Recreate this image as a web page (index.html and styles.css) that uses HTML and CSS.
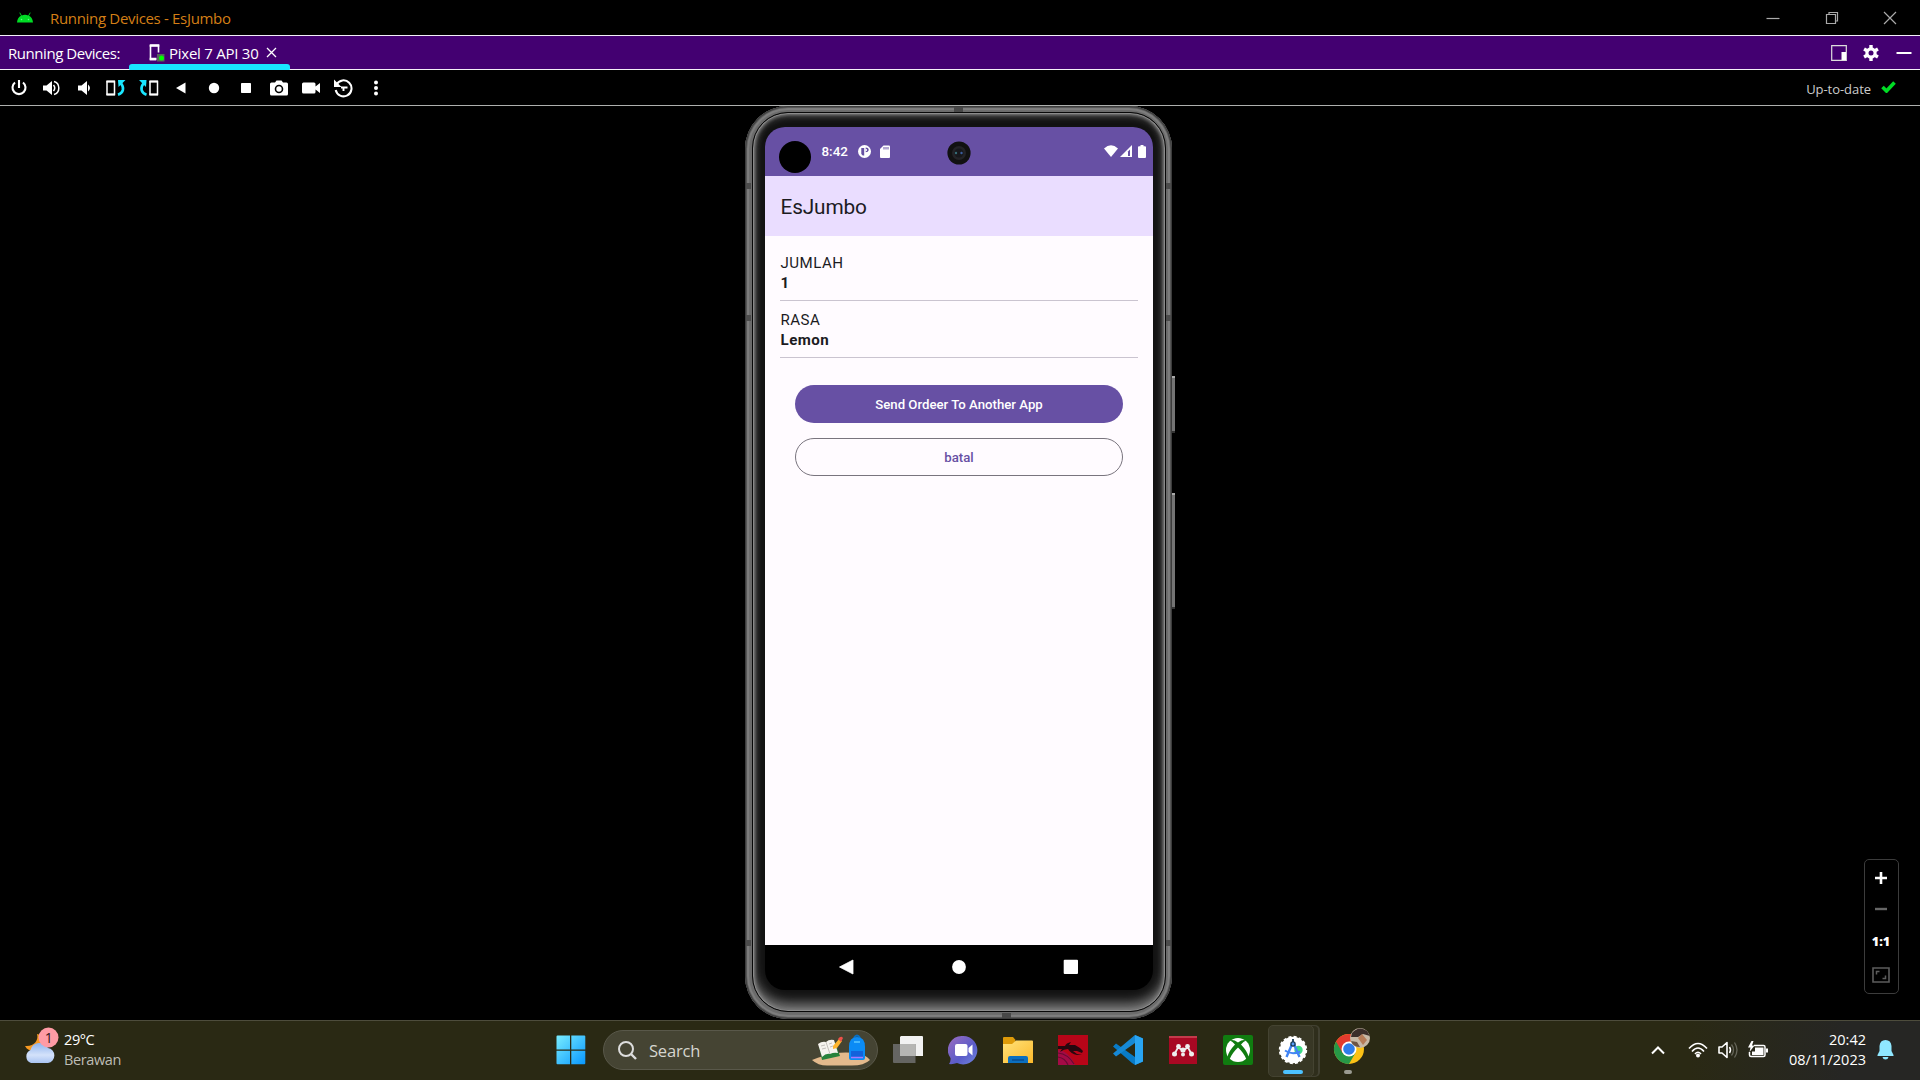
FILE: index.html
```html
<!DOCTYPE html>
<html lang="en">
<head>
<meta charset="utf-8">
<title>Running Devices - EsJumbo</title>
<link rel="stylesheet" href="styles.css">
</head>
<body>
<header class="titlebar">
  <svg class="android" width="16" height="11" viewBox="0 0 16 11"><path d="M0 10.5C.2 7.200 1.800 5 4 3.800L2.300.8l.7-.4 1.800 3c2-.8 4.400-.8 6.400 0l1.800-3 .7.400L12 3.800c2.200 1.200 3.800 3.400 4 6.700z" fill="#00dc25"/><circle cx="4.500" cy="7.500" r=".8" fill="#5fff80"/><circle cx="11.500" cy="7.500" r=".8" fill="#5fff80"/></svg>
  <span class="window-title">Running Devices - EsJumbo</span>
  <div class="window-controls">
    <svg width="14" height="14" viewBox="0 0 14 14"><path d="M.5 7.500h13"/></svg>
    <svg width="14" height="14" viewBox="0 0 14 14"><path d="M1.500 3.500h9v9h-9zM4 3.500v-2h8.500V10h-2"/></svg>
    <svg width="14" height="14" viewBox="0 0 14 14"><path d="M1 1l12 12M13 1L1 13"/></svg>
  </div>
</header>

<nav class="tabbar">
  <span class="tab-label">Running Devices:</span>
  <div class="tab">
    <svg width="16" height="18" viewBox="0 0 16 18"><path d="M1.500 1.500h8v7M1.500 1v14.500H7" fill="none" stroke="#fff" stroke-width="1.600"/><path d="M.7 1.500h9.600M.7 15h6.800" stroke="#fff" stroke-width="2.400"/><rect x="8" y="10" width="7.500" height="7.500" fill="#55665c"/><circle cx="12.500" cy="14" r="2.500" fill="#0f0"/></svg>
    <span class="tab-name">Pixel 7 API 30</span>
    <svg width="11" height="11" viewBox="0 0 11 11"><path d="M1 1l9 9M10 1l-9 9" stroke="#fff" stroke-width="1.300"/></svg>
  </div>
  <div class="tab-actions">
    <svg width="16" height="16" viewBox="0 0 16 16"><path d="M.7.7h14.600v14.600H.7z" fill="none" stroke="#ddd" stroke-width="1.200"/><path d="M10.500 7H15v8h-4.500z" fill="#fff"/></svg>
    <svg width="16" height="16" viewBox="0 0 16 16"><g fill="#fff"><circle cx="8" cy="8" r="5.700"/><path d="M6.300 0h3.400v16H6.300z"/><path d="M6.300 0h3.400v16H6.300z" transform="rotate(60 8 8)"/><path d="M6.300 0h3.400v16H6.300z" transform="rotate(120 8 8)"/></g><circle cx="8" cy="8" r="2.500" fill="#430071"/></svg>
    <svg width="16" height="16" viewBox="0 0 16 16"><path d="M.5 8h15" stroke="#fff" stroke-width="2"/></svg>
  </div>
</nav>

<div class="toolbar">
  <div class="tools">
    <svg viewBox="0 0 20 20"><path d="M6 4.500a6.500 6.500 0 1 0 8 0M10 2v8" fill="none" stroke="#fff" stroke-width="2.100"/></svg>
    <svg viewBox="0 0 20 20"><path d="M2 7.500h3.500L11 3v14l-5.500-4.500H2z" fill="#fff"/><path d="M12.500 7q2.500 3 0 6M13 3.500a6.800 6.800 0 0 1 0 13" fill="none" stroke="#fff" stroke-width="1.500"/></svg>
    <svg viewBox="0 0 20 20"><path d="M4 7.500h3.500L13 3v14l-5.500-4.500H4z" fill="#fff"/><path d="M14 6.500q4 3.500 0 7z" fill="#fff"/></svg>
    <svg viewBox="0 0 20 20"><path d="M1 3.500h7.500v13H1z" fill="none" stroke="#fff" stroke-width="1.500"/><path d="M.5 3.500H9M.5 16.500H9" stroke="#fff" stroke-width="2.200"/><path d="M12 16.800c5.500-2 6.500-6.500 3-11.500" fill="none" stroke="#19e6ff" stroke-width="2.600"/><path d="M12 2h7.500L12.500 9z" fill="#19e6ff"/></svg>
    <svg viewBox="0 0 20 20"><path d="M11 3.500h7.500v13H11z" fill="none" stroke="#fff" stroke-width="1.500"/><path d="M10.500 3.500H19M10.500 16.500H19" stroke="#fff" stroke-width="2.200"/><path d="M7.500 16.800c-5.500-2-6.500-6.500-3-11.500" fill="none" stroke="#19e6ff" stroke-width="2.600"/><path d="M7.500 2H0l7 7z" fill="#19e6ff"/></svg>
    <svg viewBox="0 0 20 20"><path d="M14.500 4.500v11L5 10z" fill="#fff"/></svg>
    <svg viewBox="0 0 20 20"><circle cx="10" cy="10" r="5.200" fill="#fff"/></svg>
    <svg viewBox="0 0 20 20"><rect x="5" y="5" width="10" height="10" rx=".7" fill="#fff"/></svg>
    <svg viewBox="0 0 20 20"><path d="M2.500 4.500H6L7.500 2.500h5L14 4.500h3.500q1.500 0 1.500 1.500v10q0 1.500-1.500 1.500h-15Q1 17.500 1 16V6q0-1.500 1.500-1.500z" fill="#fff"/><circle cx="10" cy="11" r="3.500" fill="none" stroke="#000" stroke-width="1.600"/></svg>
    <svg viewBox="0 0 20 20"><path d="M2.500 4.500H13q1.500 0 1.500 1.500v2.500L19 5v10l-4.500-3.500V14q0 1.500-1.500 1.500H2.500Q1 15.500 1 14V6q0-1.500 1.500-1.500z" fill="#fff"/></svg>
    <svg viewBox="0 0 20 20"><path d="M3.500 6.500a8 8 0 1 1-.8 5.500" fill="none" stroke="#fff" stroke-width="2"/><path d="M8 9.500h6.500M10.500 9.500v3.500" fill="none" stroke="#fff" stroke-width="1.900"/><path d="M1 1.500v7.500h7.500z" fill="#fff"/></svg>
    <svg viewBox="0 0 20 20"><g fill="#fff"><circle cx="10" cy="4.500" r="2"/><circle cx="10" cy="10" r="2"/><circle cx="10" cy="15.500" r="2"/></g></svg>
  </div>
  <div class="status">
    <span class="status-text">Up-to-date</span>
    <svg width="15" height="12" viewBox="0 0 15 12"><path d="M1.500 6l4 4L13.500 1.500" fill="none" stroke="#00dc25" stroke-width="3.600"/></svg>
  </div>
</div>

<main class="stage">
  <div class="phone">
    <i class="notch n-top"></i><i class="notch n-bottom"></i>
    <i class="band b1"></i><i class="band b2"></i><i class="band b3"></i>
    <i class="side power"></i><i class="side volume"></i>
    <div class="bezel">
      <div class="screen">
        <div class="statusbar">
          <span class="lens-hole"></span>
          <span class="clock">8:42</span>
          <svg class="sb-p" width="13" height="13" viewBox="0 0 13 13"><circle cx="6.500" cy="6.500" r="6.500" fill="#fff"/><path d="M3.300 3h2.900v7.500H4.700L3.300 9zM7.700 2.500q3.300.2 3 2.800-.4 2-3 2z" fill="#6750a4"/><circle cx="8.200" cy="5" r=".9" fill="#fff"/></svg>
          <svg class="sb-sd" width="10" height="13" viewBox="0 0 10 13"><path d="M3.500.5H9q1 0 1 1V12q0 1-1 1H1q-1 0-1-1V4z" fill="#fff"/><path d="M4 2v2.500M6 2v2.500M8 2v2.500" stroke="#6750a4"/></svg>
          <div class="signals">
            <svg width="14" height="12" viewBox="0 0 14 12"><path d="M7 12L0 3.500Q7-3 14 3.500z" fill="#fff"/></svg>
            <svg width="12" height="12" viewBox="0 0 12 12"><path d="M0 12L12 0v12z" fill="#fff"/><path d="M10 4.500v6.500H8V6.500" fill="#6750a4"/></svg>
            <svg class="cell" width="8" height="13" viewBox="0 0 8 13"><path d="M2.500 0h3v1.300H7q1 0 1 1V12q0 1-1 1H1q-1 0-1-1V2.300q0-1 1-1h1.500z" fill="#fff"/></svg>
          </div>
          <svg class="camera" width="24" height="24" viewBox="0 0 24 24"><circle cx="12" cy="12" r="11.600" fill="#111"/><circle cx="12" cy="12" r="7" fill="#232327"/><circle cx="12" cy="12" r="4.500" fill="#17181c"/><circle cx="9" cy="12" r="1.200" fill="#376e78"/><circle cx="14.500" cy="12" r="1.200" fill="#3c5fa0"/></svg>
        </div>
        <div class="appbar">EsJumbo</div>
        <div class="content">
          <div class="field"><span>JUMLAH</span><b>1</b></div>
          <div class="field"><span>RASA</span><b>Lemon</b></div>
          <div class="buttons">
            <button class="filled">Send Ordeer To Another App</button>
            <button class="outlined">batal</button>
          </div>
        </div>
        <div class="navkeys">
          <svg width="16" height="16" viewBox="0 0 16 16"><path d="M14 1v14L.5 8z" fill="#fff" stroke="#fff" stroke-linejoin="round" stroke-width=".8"/></svg>
          <svg width="16" height="16" viewBox="0 0 16 16"><circle cx="8" cy="8" r="6.900" fill="#fff"/></svg>
          <svg width="16" height="16" viewBox="0 0 16 16"><rect x=".7" y=".7" width="14.300" height="14.300" rx="1" fill="#fff"/></svg>
        </div>
      </div>
    </div>
  </div>
  <div class="zoom">
    <svg width="14" height="14" viewBox="0 0 14 14"><path d="M7 1v12M1 7h12" stroke="#fff" stroke-width="2.600"/></svg>
    <svg width="14" height="14" viewBox="0 0 14 14"><path d="M1 7h12" stroke="#666" stroke-width="2.400"/></svg>
    <span class="ratio">1:1</span>
    <svg width="18" height="16" viewBox="0 0 18 16"><path d="M1 1h16v14H1z" fill="none" stroke="#5c5c5c" stroke-width="1.600"/><path d="M4.500 7.500v-3h3M13.500 8.500v3h-3" fill="none" stroke="#5c5c5c" stroke-width="1.500"/></svg>
  </div>
</main>

<footer class="taskbar">
  <div class="weather">
    <svg width="36" height="38" viewBox="0 0 36 38">
      <defs><linearGradient id="cloud" x1="0" y1="0" x2="0" y2="1"><stop offset="0" stop-color="#8fb4ee"/><stop offset=".6" stop-color="#d4e2fa"/><stop offset="1" stop-color="#a9c4f2"/></linearGradient></defs>
      <path d="M14 7c2 6-3 13-12 12 4 8 18 7 21-2 1-6-4-9-9-10z" fill="#f79a22"/>
      <path d="M8 36a7 7 0 0 1-.5-13A9.500 9.500 0 0 1 25 21a7.600 7.600 0 0 1 0 15z" fill="url(#cloud)"/>
      <circle cx="25.500" cy="10.500" r="10" fill="#ff9ba5"/>
      <text x="25.800" y="15.500" text-anchor="middle" class="badge-number">1</text>
    </svg>
    <div class="weather-text"><span>29°C</span><span class="muted">Berawan</span></div>
  </div>
  <div class="app start">
    <svg width="30" height="30" viewBox="0 0 30 30"><defs><linearGradient id="win" x1="0" y1="0" x2="1" y2="1"><stop offset="0" stop-color="#79edff"/><stop offset="1" stop-color="#0897ff"/></linearGradient></defs><path d="M0.500 1.500q0-1 1-1H14v14H.5zM15.300.5h13q1 0 1 1v13h-14zM.5 15.800H14v13.500H1.500q-1 0-1-1zM15.300 15.800h14v12.500q0 1-1 1h-13z" fill="url(#win)"/></svg>
  </div>
  <div class="search">
    <svg width="19" height="19" viewBox="0 0 19 19"><circle cx="8" cy="8" r="7" fill="none" stroke="#ddd" stroke-width="2"/><path d="M13 13l5 5" stroke="#ddd" stroke-width="2.400"/></svg>
    <span class="search-text">Search</span>
    <svg class="art" width="58" height="32" viewBox="0 0 58 32">
      <path d="M0 26q12-5 22-6.500 14-2 25 .5 7 1 11 6-6 5.500-18 5.500H15Q6 31.500 0 26z" fill="#e3b98c"/>
      <path d="M7 12l16-4 5 14-18 4z" fill="#27823b"/><path d="M6 10q4-3 8-2 3-3 8-2l4 13q-4-1-8 1-4-1-8 3z" fill="#f6f3ee"/><path d="M14 8l4 12M9 12l4-1m-3 4l4-1m3-4l3-1m-2 4l3-1" stroke="#c4bfba" fill="none"/>
      <path d="M21 12l6-7 3 2-5 7-4 1z" fill="#ffb52e"/><path d="M26 5q3-4 5-1l-2 4z" fill="#ef5149"/>
      <path d="M42 4q3-5 6 0" fill="none" stroke="#0870c4" stroke-width="2"/><path d="M37 13q0-10 8-10t8 10v11q0 2-2 2H39q-2 0-2-2z" fill="#0b8bf5"/><path d="M39 17h12v7H39z" fill="#1262dc"/><path d="M42 8h6" stroke="#5bc7ff" stroke-width="1.500"/><path d="M39 23.500h12" stroke="#a978ff" stroke-width="1.500"/>
    </svg>
  </div>
  <div class="apps">
    <div class="app"><svg width="30" height="30" viewBox="0 0 30 30"><path d="M8 1h21q1 0 1 1v19H7V2z" fill="#f2f2f2"/><path d="M0 9h22.500v19H1q-1 0-1-1z" fill="#656562"/><path d="M7 9h15.500v12H7z" fill="#b6b6b4"/></svg></div>
    <div class="app"><svg width="30" height="30" viewBox="0 0 30 30"><defs><linearGradient id="chat" x1="0" y1="0" x2="1" y2="1"><stop offset="0" stop-color="#9d6dc0"/><stop offset=".6" stop-color="#5a5cc9"/><stop offset="1" stop-color="#7187e0"/></linearGradient></defs><path d="M15 1a14.200 14.200 0 1 1-6 27Q5 29.500 1 29q2-3 1.500-6A14 14 0 0 1 15 1z" fill="url(#chat)"/><rect x="7" y="9" width="12.500" height="12" rx="2" fill="#fff"/><path d="M20.500 13l4-3.500v11l-4-3.500z" fill="#fff"/></svg></div>
    <div class="app"><svg width="30" height="30" viewBox="0 0 30 30"><defs><linearGradient id="folder" x1="0" y1="0" x2="1" y2="1"><stop offset="0" stop-color="#ffe27a"/><stop offset="1" stop-color="#fcb92b"/></linearGradient></defs><path d="M0 3q0-1 1-1h9l3 3.500h-1V10H0z" fill="#dd9a09"/><path d="M0 9h9l4-3.500h16q1 0 1 1V28H0z" fill="url(#folder)"/><path d="M5 28v-5q0-2 2-2h16q2 0 2 2v5z" fill="#0b6fc0"/><path d="M9 25h12" stroke="#0a4b91" stroke-width="1.500"/></svg></div>
    <div class="app"><svg width="30" height="30" viewBox="0 0 30 30"><path d="M0 0h30v30H0z" fill="#b80518"/><path d="M0 15q11 1 17 15H0z" fill="#a30b46"/><path d="M0 11h7q1-3 6-4l-2 3 6 0 5 3 3 3-1 2-5-2-4 0 4 3 5 1-5 0q-6-1-9-6-4 0-8 3l2-3H0z" fill="#25080f"/><path d="M0 18q10 1 16 11M0 22q7 1 10 8" stroke="#670b31" fill="none" stroke-width="1.200"/></svg></div>
    <div class="app"><svg width="30" height="30" viewBox="0 0 30 30"><path d="M22 0l8 3.500v23L22 30l-3-2L0 11.500 3 8.500 22 22z" fill="#087bc7"/><path d="M22 8V0L0 18.500l3 3z" fill="#1689d6"/><path d="M22 0l8 3.500v23L22 30z" fill="#29a5f3"/></svg></div>
    <div class="app"><svg width="28" height="28" viewBox="0 0 28 28"><path d="M0 0h28v28H0z" fill="#a80823"/><path d="M0 0h28v2H0z" fill="#c33a4b"/><path d="M5.500 18L9 11.500l5 3 5-3 3.500 6.500" fill="none" stroke="#eee" stroke-width="1.800"/><g fill="#eee"><circle cx="9.500" cy="10.500" r="2.400"/><circle cx="18.500" cy="10.500" r="2.400"/><circle cx="14" cy="14" r="2.600"/><circle cx="5.500" cy="18" r="2.500"/><circle cx="22.500" cy="18" r="2.500"/><circle cx="14" cy="18.500" r="2"/></g></svg></div>
    <div class="app"><svg width="30" height="30" viewBox="0 0 30 30"><rect width="30" height="30" rx="2" fill="#107c10"/><circle cx="15" cy="15" r="12" fill="#fff"/><path d="M7 5.500Q10 4 15 7.500 20 4 23 5.500q-2.500 1-5 4Q25 17 25.500 22l-2 2.500Q21 18 15 12.500 9 18 6.500 24.500L4.500 22Q5 17 12 9.500q-2.500-3-5-4z" fill="#107c10"/></svg></div>
    <div class="app active"><svg width="30" height="30" viewBox="0 0 30 30"><circle cx="15" cy="15" r="13.200" fill="#fff" stroke="#fff" stroke-width="2" stroke-dasharray="3 2.200"/><circle cx="20.500" cy="15" r="4.200" fill="#3ddc84"/><path d="M14.500 8L8.500 22M15.500 8l6 14" stroke="#4285f4" stroke-width="2.400"/><path d="M7 15.500q7 5 15 1" fill="none" stroke="#4285f4" stroke-width="2"/><circle cx="15" cy="9" r="2.100" fill="#5a9df8" stroke="#173b58" stroke-width="1.300"/><path d="M15 4v3" stroke="#173b58" stroke-width="1.800"/></svg></div>
    <div class="app running"><svg width="38" height="38" viewBox="0 0 38 38"><circle cx="16" cy="22" r="15" fill="#fbc116"/><path d="M3 14.500A15 15 0 0 0 16 37l6.500-11.300L16 22z" fill="#279847"/><path d="M3 14.500L9.500 26l6.500-4V14.500h13A15 15 0 0 0 3 14.500z" fill="#e33b2e"/><circle cx="16" cy="22" r="7.500" fill="#fff"/><circle cx="16" cy="22" r="5.800" fill="#2f7deb"/><circle cx="27" cy="11" r="10" fill="#c6b8a7"/><path d="M19 6q7-8 15-2l3 5-7-2-5 3-7 0z" fill="#3b2e2b"/><path d="M25 11l4-4 5 6-4 5z" fill="#b57b58"/><path d="M18 14l6 1 3 5q-7 0-9-6z" fill="#6d5546"/></svg></div>
  </div>
  <div class="tray">
    <svg class="chevron" width="14" height="9" viewBox="0 0 14 9"><path d="M1 7.500l6-6 6 6" fill="none" stroke="#fff" stroke-width="2"/></svg>
    <svg class="wifi" width="20" height="16" viewBox="0 0 20 16"><g fill="none" stroke="#fff" stroke-width="1.600"><path d="M1 6.500q9-10 18 0M4 9.500q6-7 12 0M7 12q3-3.500 6 0"/></g><circle cx="10" cy="13.500" r="2" fill="#fff"/></svg>
    <svg class="sound" width="20" height="18" viewBox="0 0 20 18"><path d="M1 6h3l5-4.500v15L4 12H1z" fill="none" stroke="#fff" stroke-width="1.600" stroke-linejoin="round"/><path d="M11.500 6q2 3 0 6" fill="none" stroke="#fff" stroke-width="1.500"/><path d="M13.500 3.500q4 5.500 0 11M16.500 1.500q5 7.500 0 15" fill="none" stroke="#66665a" stroke-width="1.300"/></svg>
    <svg class="battery" width="20" height="18" viewBox="0 0 20 18"><path d="M6 4.500h9.500q1.500 0 1.500 1.500v8q0 1.500-1.500 1.500H3Q1.500 15.500 1.500 14v-3" fill="none" stroke="#fff" stroke-width="1.500"/><path d="M7 6.500h8.500V14H4v-3.500h3zM18 7.500h2v4h-2zM3.500 0L0 6.500h2.500L1.500 11l5-6.500H4L5.500 0z" fill="#fff"/></svg>
    <div class="datetime"><span>20:42</span><span>08/11/2023</span></div>
    <svg class="bell" width="17" height="20" viewBox="0 0 17 20"><path d="M8.500 0q5.500 0 6 6v5l2 4v1H.5v-1l2-4V6q.5-6 6-6zM5.500 17h6q-.5 2.500-3 2.500t-3-2.500z" fill="#8fe7ff"/></svg>
  </div>
</footer>
</body>
</html>
```
FILE: styles.css
```css
* { box-sizing: border-box; }
body {
  margin: 0;
  width: 1920px;
  height: 1080px;
  display: flex;
  flex-direction: column;
  overflow: hidden;
  background: #000;
  color: #fff;
  font-family: "Open Sans", "Noto Sans", sans-serif;
  font-size: 15px;
  white-space: nowrap;
}
svg { display: block; flex: none; }

.titlebar {
  height: 36px;
  flex: none;
  display: flex;
  align-items: center;
  padding: 0 23px 0 17px;
  border-bottom: 1px solid #f4eff8;
}
.window-title { margin: 0 0 0 17px; color: #d47f16; letter-spacing: -.32px; }
.window-controls { margin-left: auto; display: flex; gap: 44.500px; }
.window-controls svg { fill: none; stroke: #aaa; stroke-width: 1.200; }

.tabbar {
  height: 34px;
  flex: none;
  display: flex;
  align-items: center;
  padding: 0 8px;
  background: #430071;
  border-bottom: 1px solid #f4eff8;
}
.tab-label { width: 121px; letter-spacing: -.45px; }
.tab {
  height: 33px;
  width: 161px;
  padding: 0 13px 0 20px;
  display: flex;
  align-items: center;
  position: relative;
}
.tab::after {
  content: "";
  position: absolute;
  left: 0;
  right: 0;
  bottom: -1px;
  height: 6px;
  border-radius: 3px 3px 1px 1px;
  background: #19e6ff;
}
.tab-name { margin: 0 auto 0 4px; letter-spacing: -.25px; }
.tab-actions { margin-left: auto; display: flex; gap: 16.500px; }
.tab-actions svg:nth-child(2) { margin-left: -1px; margin-right: 1px; }

.toolbar {
  height: 36px;
  flex: none;
  display: flex;
  align-items: center;
  padding: 0 24px 0 9px;
  border-bottom: 1px solid #aeb0ae;
}
.tools { display: flex; gap: 12.450px; }
.tools svg { width: 20px; height: 20px; }
.status { margin-left: auto; display: flex; align-items: center; gap: 10px; }
.status svg { margin-top: -1px; }
.status-text { font-size: 13px; color: #ccc; margin-top: 2px; letter-spacing: -.05px; }

.stage { height: 914px; flex: none; position: relative; display: flex; justify-content: center; padding-right: 3px; }
.phone {
  position: relative;
  width: 427px;
  height: 913px;
  padding: 6px 6px 7px 7px;
  border-radius: 43px;
  background: #6b6b6b;
  box-shadow: inset 0 0 0 1px #3c3c3c, inset 0 0 1px 2px #525252, inset 0 0 1px 4px #808080;
}
.bezel {
  height: 900px;
  padding: 14px 12px 22px 12px;
  border: 1px solid #080808;
  border-radius: 36px;
  background: #121212;
  box-shadow: inset 0 0 0 1px #8a8a8a, inset 0 0 3px 2px #777, inset 0 -9px 12px -1px #7a7a7a, inset 0 3px 6px 1px #484848;
}
.screen {
  width: 388px;
  height: 863px;
  border-radius: 20px;
  overflow: hidden;
  background: #000;
  color: #1c1b1f;
  font-family: Roboto, sans-serif;
}
.notch { position: absolute; width: 9px; height: 5px; background: #484848; }
.n-top { left: 209px; top: 1px; }
.n-bottom { left: 257px; bottom: 1px; }
.band { position: absolute; left: 1px; right: 1px; height: 6px; border: solid #4c4c4c; border-width: 0 5px; }
.b1 { top: 77px; }
.b2 { top: 209px; }
.b3 { top: 834px; }
.side {
  position: absolute;
  left: 427px;
  width: 3px;
  background: #747474;
  border-top: 2px solid #aaa;
  border-bottom: 2px solid #333;
}
.side.power { top: 270px; height: 57px; }
.side.volume { top: 387px; height: 116px; }

.statusbar {
  position: relative;
  height: 49px;
  display: flex;
  align-items: flex-start;
  padding: 14px 7px 0 14px;
  background: #6750a4;
  color: #fff;
}
.lens-hole { width: 32px; height: 32px; border-radius: 50%; background: #000; }
.clock { margin: 2px 0 0 10.500px; width: 26px; font-size: 13.400px; font-weight: 500; line-height: 17px; }
.sb-p { margin: 4px 0 0 10.500px; }
.sb-sd { margin: 4px 0 0 9px; }
.signals { margin: 4px 0 0 auto; display: flex; gap: 1.500px; }
.cell { margin-left: 5px; }
.camera { position: absolute; left: 181.500px; top: 13.500px; }

.appbar { height: 60px; padding: 1px 15.500px 0; background: #eaddff; font-size: 20.800px; line-height: 60px; letter-spacing: -.15px; }
.content { height: 709px; padding: 15px; background: #fffbff; }
.field {
  display: flex;
  flex-direction: column;
  height: 50px;
  margin-bottom: 7px;
  padding: 2px 0 0 .5px;
  border-bottom: 1px solid #cac4d0;
  font-size: 15.100px;
  line-height: 20.300px;
  letter-spacing: .47px;
}
.field b { font-weight: 700; }
.buttons { display: flex; flex-direction: column; gap: 15px; padding: 20px 15px; }
.buttons button {
  height: 38px;
  padding: 1px 0 0;
  border: 0;
  border-radius: 19px;
  font: 500 13.200px/16px Roboto, sans-serif;
  letter-spacing: 0;
}
.buttons .filled { background: #6750a4; color: #fff; }
.buttons .outlined { background: none; border: 1px solid #79747e; color: #6750a4; }
.navkeys { height: 45px; padding-bottom: 1px; display: flex; justify-content: center; gap: 96px; align-items: center; }

.zoom {
  position: absolute;
  left: 1864px;
  top: 753px;
  width: 35px;
  height: 135px;
  padding: 11px 1px 10px 0;
  display: flex;
  flex-direction: column;
  align-items: center;
  justify-content: space-between;
  border: 1px solid #3c3c3c;
  border-radius: 5px;
}
.ratio { font: 800 12.500px/16px "Open Sans", sans-serif; }

.taskbar {
  height: 60px;
  flex: none;
  display: flex;
  align-items: center;
  padding-bottom: 1px;
  background: linear-gradient(90deg, #2a2914 0, #2a2914 88%, #262624 96%);
  border-top: 1px solid #4d4c3c;
}
.weather { width: 543.500px; padding-left: 23px; display: flex; align-items: center; }
.weather svg { margin-top: -8px; }
.badge-number { font: 14px "Open Sans", sans-serif; fill: #331518; }
.weather-text { margin-left: 5px; display: flex; flex-direction: column; line-height: 20px; font-size: 14.500px; letter-spacing: -.4px; }
.muted { color: #bdbdb5; }
.app { position: relative; width: 55px; height: 50px; display: flex; align-items: center; justify-content: center; }
.search {
  width: 275px;
  height: 40px;
  margin: 0 2.500px 0 4.500px;
  padding: 0 7px 0 14px;
  display: flex;
  align-items: center;
  border: 1px solid #59584a;
  border-radius: 20px;
  background: #454433;
}
.search-text { margin-left: 12px; font-size: 16.500px; color: #d6d6cf; letter-spacing: -.2px; }
.art { margin-left: auto; }
.apps { display: flex; }
.active::before {
  content: "";
  position: absolute;
  left: 2px;
  top: 0;
  width: 44px;
  height: 50px;
  border: 1px solid #444331;
  border-radius: 5px;
  background: #383725;
  box-shadow: 5px 0 0 -1px #2f2e1c, 6px 0 0 0 #414031;
}
.active svg { position: relative; }
.active::after, .running::after {
  content: "";
  position: absolute;
  bottom: 1px;
  width: 20px;
  height: 4px;
  border-radius: 2px;
  background: #4cc2ff;
}
.running::after { width: 8px; background: #9a9a90; }
.running svg { margin: -8px 0 0 8px; }
.tray { flex: 1; display: flex; align-items: center; justify-content: flex-end; padding-right: 26px; }
.wifi { margin-left: 23px; }
.sound { margin-left: 10px; }
.battery { margin-left: 10px; }
.datetime { width: 98px; display: flex; flex-direction: column; align-items: flex-end; font-size: 14.500px; line-height: 20px; letter-spacing: 0; }
.bell { margin-left: 11px; }
```
